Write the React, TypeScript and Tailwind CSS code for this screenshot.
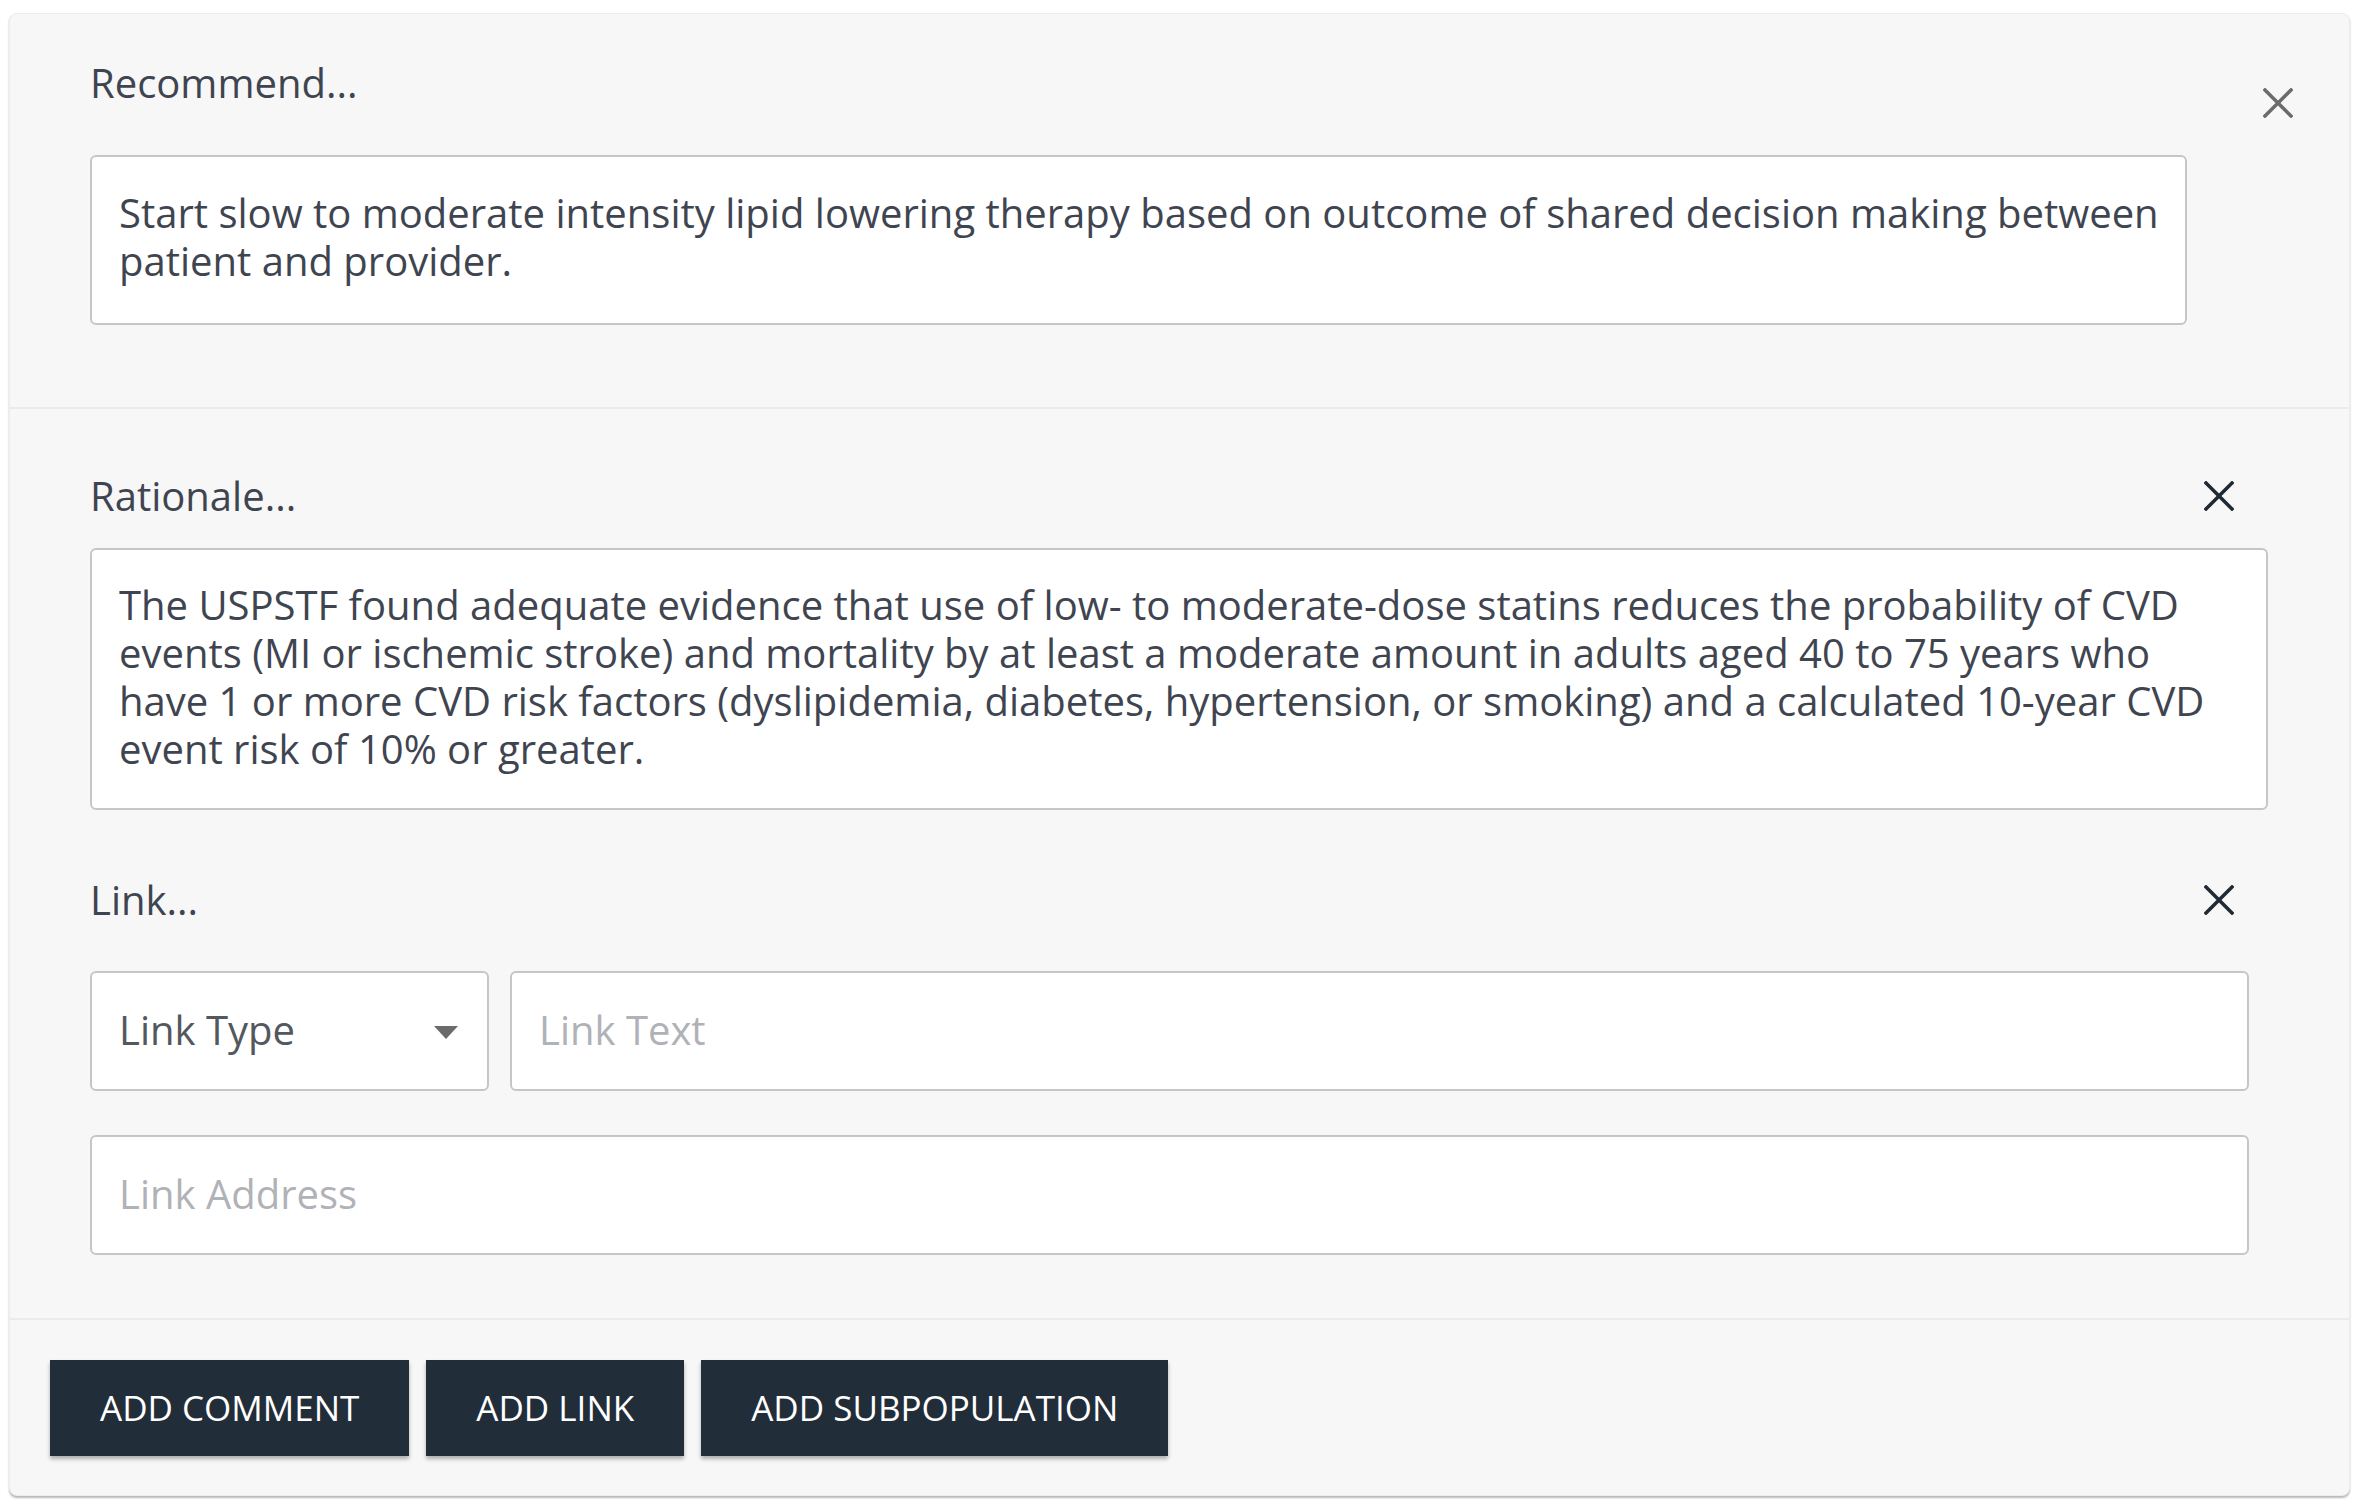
import React from "react";

function CloseIcon({ color }: { color: string }) {
  return (
    <svg width="30" height="30" viewBox="0 0 30 30" className="block">
      <path d="M2 2 L28 28 M28 2 L2 28" stroke={color} strokeWidth="3.5" strokeLinecap="square" fill="none" />
    </svg>
  );
}

const font = { fontFamily: '"Open Sans", "Noto Sans", sans-serif' };

export default function App() {
  return (
    <div className="min-h-screen bg-white pt-[13px] pl-[9px] pr-[10px]" style={font}>
      <div className="rounded-[8px] border border-[#ececec] bg-[#f7f7f7] shadow-[0_2px_2px_rgba(0,0,0,0.28)] text-[40px] leading-[48px] text-[#3f4550]">
        {/* Recommend */}
        <div className="flex pl-[80px] pt-[45px] pb-[82px]">
          <div className="w-[2097px]">
            <div className="h-[48px]">Recommend...</div>
            <div className="mt-[48px] rounded-[6px] border-2 border-[#c6c6c6] bg-white pl-[27px] pr-[20px] pt-[32px] pb-[38px]">
              Start slow to moderate intensity lipid lowering therapy based on outcome of shared decision making between patient and provider.
            </div>
          </div>
          <button type="button" className="ml-[76px] mt-[29px] h-[30px] w-[30px]">
            <CloseIcon color="#6b6b6b" />
          </button>
        </div>

        <div className="h-[2px] bg-[#ebebef]" />

        {/* Rationale + Link */}
        <div className="pl-[80px] pt-[63px] pb-[63px]">
          <div className="flex h-[48px] w-[2144px] items-center justify-between">
            <span>Rationale...</span>
            <CloseIcon color="#1f2a35" />
          </div>
          <div className="mt-[28px] w-[2178px] rounded-[6px] border-2 border-[#c6c6c6] bg-white pl-[27px] pr-[20px] pt-[31px] pb-[35px]">
            The USPSTF found adequate evidence that use of low- to moderate-dose statins reduces the probability of CVD events (MI or ischemic stroke) and mortality by at least a moderate amount in adults aged 40 to 75 years who have 1 or more CVD risk factors (dyslipidemia, diabetes, hypertension, or smoking) and a calculated 10-year CVD event risk of 10% or greater.
          </div>

          <div className="mt-[66px] flex h-[48px] w-[2144px] items-center justify-between">
            <span>Link...</span>
            <CloseIcon color="#1f2a35" />
          </div>

          <div className="mt-[47px] flex w-[2159px] gap-[21px]">
            <div className="flex h-[120px] w-[399px] items-center justify-between rounded-[6px] border-2 border-[#c6c6c6] bg-white pb-[3px] pl-[27px] pr-[29px] text-[#53575e]">
              <span>Link Type</span>
              <svg width="24" height="13" viewBox="0 0 24 13" className="mt-[6px]">
                <path d="M0 0 L24 0 L12 13 Z" fill="#6b6b6b" />
              </svg>
            </div>
            <div className="flex h-[120px] flex-1 items-center rounded-[6px] border-2 border-[#c6c6c6] bg-white pb-[3px] pl-[27px] text-[#b0b2b7]">
              Link Text
            </div>
          </div>

          <div className="mt-[44px] flex h-[120px] w-[2159px] items-center rounded-[6px] border-2 border-[#c6c6c6] bg-white pb-[3px] pl-[27px] text-[#b0b2b7]">
            Link Address
          </div>
        </div>

        <div className="h-[2px] bg-[#ebebef]" />

        {/* Buttons */}
        <div className="flex gap-[17px] pl-[40px] pt-[40px] pb-[39px]">
          {["ADD COMMENT", "ADD LINK", "ADD SUBPOPULATION"].map((label) => (
            <button
              key={label}
              type="button"
              className="h-[96px] bg-[#222d3a] px-[50px] text-[35px] text-white shadow-[0_3px_4px_rgba(0,0,0,0.3)]"
            >
              {label}
            </button>
          ))}
        </div>
      </div>
    </div>
  );
}
